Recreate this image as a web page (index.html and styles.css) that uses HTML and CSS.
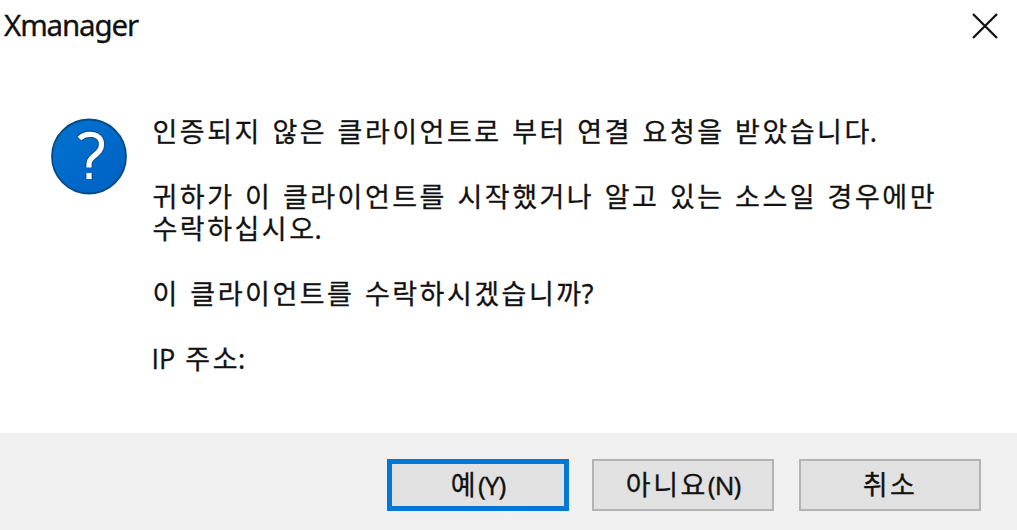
FILE: index.html
```html
<!DOCTYPE html>
<html lang="ko">
<head>
<meta charset="utf-8">
<title>Xmanager</title>
<link rel="stylesheet" href="styles.css">
</head>
<body>
<div class="dialog">
  <header class="titlebar">
    <span class="title">Xmanager</span>
    <svg class="close" viewBox="0 0 28 28"><path d="M2 2L26 26M26 2L2 26"/></svg>
  </header>
  <main class="content">
    <svg class="question" viewBox="0 0 78 78">
      <defs>
        <linearGradient id="disc" x1="0" y1="0" x2="1" y2="1">
          <stop offset="0" stop-color="#0074d2"/>
          <stop offset="1" stop-color="#0060c2"/>
        </linearGradient>
      </defs>
      <circle cx="39" cy="38.500" r="37" fill="url(#disc)" stroke="#0a4a80" stroke-width="1.800"/>
      <g class="mark-edge"><path d="M29.500 20.500C36 14 51.500 14.500 51.500 26.500C51.500 37 39 37.500 39 46V49.500"/><path d="M39 55V61"/></g>
      <g class="mark"><path d="M29.500 20.500C36 14 51.500 14.500 51.500 26.500C51.500 37 39 37.500 39 46V49.500"/><path d="M39 55V61"/></g>
    </svg>
    <div class="message">
      <p class="line">인증되지 않은 클라이언트로 부터 연결 요청을 받았습니다<span class="punct">.</span></p>
      <p class="line">귀하가 이 클라이언트를 시작했거나 알고 있는 소스일 경우에만<br>수락하십시오<span class="punct">.</span></p>
      <p class="line">이 클라이언트를 수락하시겠습니까<span class="punct">?</span></p>
      <p class="line"><span class="latin">IP </span>주소<span class="punct">:</span></p>
    </div>
  </main>
  <footer class="actions">
    <button class="button primary">예<span class="key">(Y)</span></button>
    <button class="button">아니요<span class="key">(N)</span></button>
    <button class="button cancel">취소</button>
  </footer>
</div>
</body>
</html>
```
FILE: styles.css
```css
* { box-sizing: border-box; }
body { margin: 0; }
.dialog {
  width: 1017px; height: 530px;
  display: flex; flex-direction: column;
  background: #fff; color: #111;
  font-family: "Noto Sans", "Noto Sans CJK KR", sans-serif;
  font-size: 27px;
  -webkit-text-stroke: 0.3px #111;
}
.titlebar {
  height: 110px; padding: 6px 18.5px 0 4px;
  display: flex; justify-content: space-between; align-items: flex-start;
}
.title { font-size: 29.5px; line-height: 38px; letter-spacing: -1.15px; }
.close { width: 28px; height: 28px; margin-top: 6px; fill: none; stroke: #111; stroke-width: 2.3; }
.content { flex: 1; display: flex; padding-left: 50px; }
.question { width: 78px; height: 78px; margin-top: 8px; flex: none; fill: none; }
.mark { stroke: #fff; stroke-width: 5.2; }
.mark-edge { stroke: #0a4f94; stroke-width: 7.5; }
.message {
  margin-left: 24.5px; padding-top: 5.5px;
  display: flex; flex-direction: column; gap: 32.5px;
}
.line { margin: 0; line-height: 32.5px; white-space: nowrap; letter-spacing: 2.5px; word-spacing: 1px; }
.latin { font-family: "Open Sans", sans-serif; letter-spacing: 0; word-spacing: 3px; margin-left: -1px; }
.punct { margin-left: -2px; letter-spacing: 0; }
.actions {
  height: 97px; padding: 26px 36px 0 0;
  display: flex; justify-content: flex-end; gap: 23px;
  background: #f0f0f0;
}
.button {
  width: 182px; height: 52px; padding: 0 0 4px;
  border: 2px solid #b3b3b3; background: #e1e1e1; color: #111;
  font: inherit; letter-spacing: 2.5px;
}
.primary { border: 5px solid #0078d7; }
.cancel { margin-left: 2px; }
.key { font-size: 26px; letter-spacing: -1px; }
```
